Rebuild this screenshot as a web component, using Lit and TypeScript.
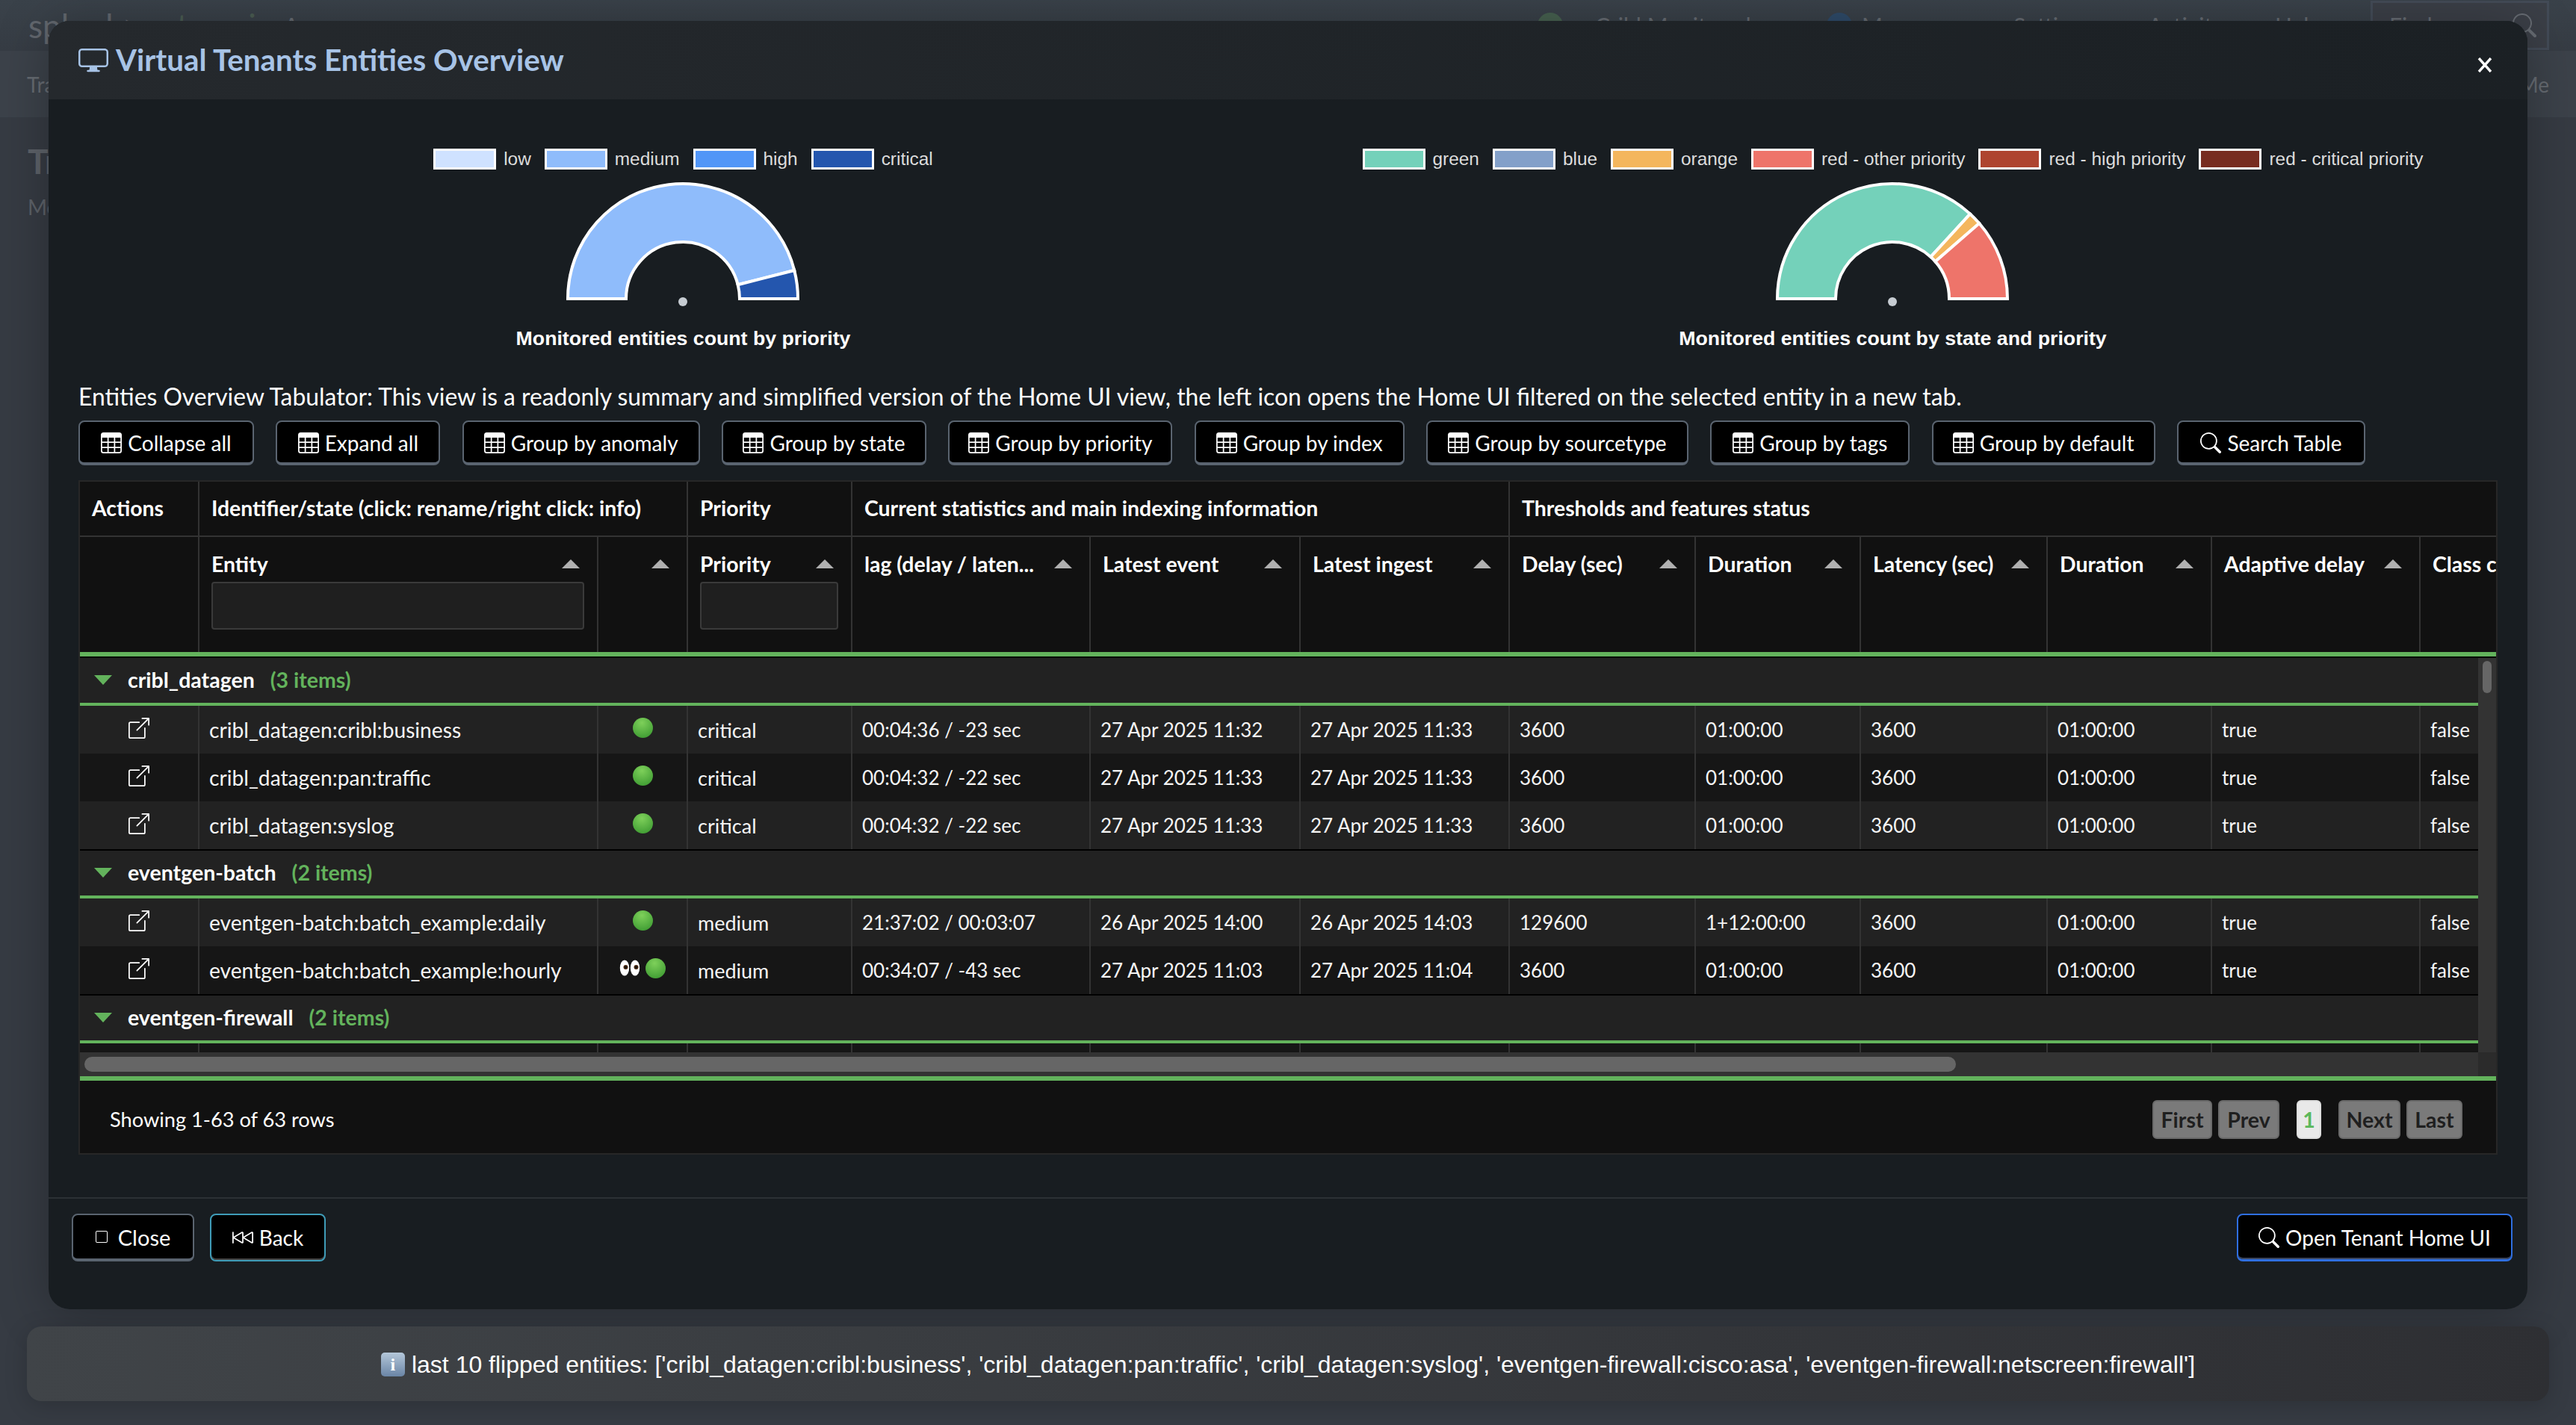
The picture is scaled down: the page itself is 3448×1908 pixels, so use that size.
import { LitElement, html, css, svg } from "lit";
import { customElement } from "lit/decorators.js";

const P = {
  table: "M0 2a2 2 0 0 1 2-2h12a2 2 0 0 1 2 2v12a2 2 0 0 1-2 2H2a2 2 0 0 1-2-2zm15 2h-4v3h4zm0 4h-4v3h4zm0 4h-4v3h3a1 1 0 0 0 1-1zm-5 3v-3H6v3zm-5 0v-3H1v2a1 1 0 0 0 1 1zm-4-4h4V8H1zm0-4h4V4H1zm5-3v3h4V4zm4 4H6v3h4z",
  search: "M11.742 10.344a6.5 6.5 0 1 0-1.397 1.398h-.001q.044.06.098.115l3.85 3.85a1 1 0 0 0 1.415-1.414l-3.85-3.85a1 1 0 0 0-.115-.1zM12 6.5a5.5 5.5 0 1 1-11 0 5.5 5.5 0 0 1 11 0",
  display: "M0 4s0-2 2-2h12s2 0 2 2v6s0 2-2 2h-4q0 1 .25 1.5H11a.5.5 0 0 1 0 1H5a.5.5 0 0 1 0-1h.75Q6 13 6 12H2s-2 0-2-2zm1.398-.855a.76.76 0 0 0-.254.302A1.5 1.5 0 0 0 1 4.01V10c0 .325.078.502.145.602q.105.156.302.254a1.5 1.5 0 0 0 .538.143L2.01 11H14c.325 0 .502-.078.602-.145a.76.76 0 0 0 .254-.302 1.5 1.5 0 0 0 .143-.538L15 9.99V4c0-.325-.078-.502-.145-.602a.76.76 0 0 0-.302-.254A1.5 1.5 0 0 0 13.99 3H2c-.325 0-.502.078-.602.145",
  back: "M.5 3.5A.5.5 0 0 1 1 4v3.248l6.267-3.636c.52-.302 1.233.043 1.233.696v2.94l6.267-3.636c.52-.302 1.233.043 1.233.696v7.384c0 .653-.713.998-1.233.696L8.5 8.752v2.94c0 .653-.713.998-1.233.696L1 8.752V12a.5.5 0 0 1-1 0V4a.5.5 0 0 1 .5-.5m7 1.133L1.696 8 7.5 11.367zm7.5 0L9.196 8 15 11.367z",
  square: "M14 1a1 1 0 0 1 1 1v12a1 1 0 0 1-1 1H2a1 1 0 0 1-1-1V2a1 1 0 0 1 1-1zM2 0a2 2 0 0 0-2 2v12a2 2 0 0 0 2 2h12a2 2 0 0 0 2-2V2a2 2 0 0 0-2-2z",
  ext1: "M8.636 3.5a.5.5 0 0 0-.5-.5H1.5A1.5 1.5 0 0 0 0 4.5v10A1.5 1.5 0 0 0 1.5 16h10a1.5 1.5 0 0 0 1.5-1.5V7.864a.5.5 0 0 0-1 0V14.5a.5.5 0 0 1-.5.5h-10a.5.5 0 0 1-.5-.5v-10a.5.5 0 0 1 .5-.5h6.636a.5.5 0 0 0 .5-.5",
  ext2: "M16 .5a.5.5 0 0 0-.5-.5h-5a.5.5 0 0 0 0 1h3.793L6.146 9.146a.5.5 0 1 0 .708.708L15 1.707V5.5a.5.5 0 0 0 1 0z",
};

const icon = (d: string, size: number, cls = "") => html`<svg class="ico ${cls}" width=${size} height=${size} viewBox="0 0 16 16" fill="currentColor"><path fill-rule="evenodd" d=${d}></path></svg>`;
const extIcon = () => html`<svg class="ico" width="28" height="28" viewBox="0 0 16 16" fill="currentColor"><path fill-rule="evenodd" d=${P.ext1}></path><path fill-rule="evenodd" d=${P.ext2}></path></svg>`;

const CX = 160, CY = 160, RO = 154, RI = 76;
function slice(a0: number, a1: number) {
  const p = (r: number, a: number) => { const t = (a * Math.PI) / 180; return `${(CX + r * Math.cos(t)).toFixed(2)} ${(CY - r * Math.sin(t)).toFixed(2)}`; };
  return `M${p(RO, a0)} A${RO} ${RO} 0 0 1 ${p(RO, a1)} L${p(RI, a1)} A${RI} ${RI} 0 0 0 ${p(RI, a0)} Z`;
}
const gauge = (parts: { from: number; to: number; color: string }[]) => html`<svg class="gauge" width="320" height="172" viewBox="0 0 320 172">
  ${parts.map((s) => svg`<path d=${slice(s.from, s.to)} fill=${s.color} stroke="#fff" stroke-width="4" stroke-linejoin="miter"></path>`)}
  <circle cx="160" cy="164" r="6" fill="#c6ccd2"></circle>
</svg>`;

const chart = (legend: [string, string][], parts: { from: number; to: number; color: string }[], label: string) => html`<div class="chart">
  <div class="legend">${legend.map(([c, t]) => html`<span class="lg"><i class="sw" style="background:${c}"></i>${t}</span>`)}</div>
  ${gauge(parts)}
  <div class="chart-label">${label}</div>
</div>`;

const TOOLBAR: [string, number, string][] = [
  ["Collapse all", 235, P.table], ["Expand all", 220, P.table], ["Group by anomaly", 318, P.table], ["Group by state", 274, P.table],
  ["Group by priority", 300, P.table], ["Group by index", 281, P.table], ["Group by sourcetype", 351, P.table], ["Group by tags", 267, P.table],
  ["Group by default", 299, P.table], ["Search Table", 252, P.search],
];

const TOP_ITEMS: [string, number][] = [["Settings", 180], ["Activity", 170], ["Help", 128]];

const H2: [string, boolean][] = [["", false], ["Entity", true], ["", true], ["Priority", true], ["lag (delay / laten...", true], ["Latest event", true], ["Latest ingest", true], ["Delay (sec)", true], ["Duration", true], ["Latency (sec)", true], ["Duration", true], ["Adaptive delay", true], ["Class change", true]];

type Row = { e: string; eyes?: boolean; p: string; lag: string; ev: string; ing: string; d: string; dd: string };
const GROUPS: { name: string; n: number; rows: Row[] }[] = [
  { name: "cribl_datagen", n: 3, rows: [
    { e: "cribl_datagen:cribl:business", p: "critical", lag: "00:04:36 / -23 sec", ev: "27 Apr 2025 11:32", ing: "27 Apr 2025 11:33", d: "3600", dd: "01:00:00" },
    { e: "cribl_datagen:pan:traffic", p: "critical", lag: "00:04:32 / -22 sec", ev: "27 Apr 2025 11:33", ing: "27 Apr 2025 11:33", d: "3600", dd: "01:00:00" },
    { e: "cribl_datagen:syslog", p: "critical", lag: "00:04:32 / -22 sec", ev: "27 Apr 2025 11:33", ing: "27 Apr 2025 11:33", d: "3600", dd: "01:00:00" },
  ] },
  { name: "eventgen-batch", n: 2, rows: [
    { e: "eventgen-batch:batch_example:daily", p: "medium", lag: "21:37:02 / 00:03:07", ev: "26 Apr 2025 14:00", ing: "26 Apr 2025 14:03", d: "129600", dd: "1+12:00:00" },
    { e: "eventgen-batch:batch_example:hourly", eyes: true, p: "medium", lag: "00:34:07 / -43 sec", ev: "27 Apr 2025 11:03", ing: "27 Apr 2025 11:04", d: "3600", dd: "01:00:00" },
  ] },
  { name: "eventgen-firewall", n: 2, rows: [] },
];

const PAGES: [string, number, boolean][] = [["First", 80, false], ["Prev", 82, false], ["1", 33, true], ["Next", 83, false], ["Last", 75, false]];

const eyes = () => html`<svg class="eyes" width="28" height="22" viewBox="0 0 28 22">
  <ellipse cx="7" cy="11" rx="6.2" ry="10.5" fill="#fff"></ellipse><ellipse cx="21" cy="11" rx="6.2" ry="10.5" fill="#fff"></ellipse>
  <circle cx="8.5" cy="10" r="3" fill="#4a2a12"></circle><circle cx="22.5" cy="10" r="3" fill="#4a2a12"></circle>
  <circle cx="8.5" cy="10" r="1.5" fill="#111"></circle><circle cx="22.5" cy="10" r="1.5" fill="#111"></circle>
</svg>`;

@customElement("app-root")
export class AppRoot extends LitElement {
  static styles = css`
    :host { display: block; position: relative; width: 3448px; height: 1908px; overflow: hidden; background: #363b43; font-family: Lato, "Open Sans", sans-serif; color: #fff; }
    * { box-sizing: border-box; }
    .ico { flex: none; display: block; }

    /* dimmed page behind the modal */
    .topbar { height: 68px; display: flex; align-items: center; padding: 0 36px 0 38px; background: linear-gradient(#3a424a, #363c44); color: #666b72; font-size: 30px; }
    .brand { font-size: 44px; width: 342px; color: #62676e; white-space: nowrap; }
    .brand b { font-weight: 400; color: #4a5c52; }
    .apps { flex: 1; }
    .tb-dot { width: 34px; height: 34px; border-radius: 50%; margin-right: 43px; background: #46604f; flex: none; }
    .tb-dot.blue { background: #2e4a68; margin-right: 13px; }
    .tb-item { white-space: nowrap; flex: none; }
    .cribl { width: 310px; }
    .msgs { width: 203px; }
    .find { width: 239px; height: 66px; border: 3px solid #434b57; background: #3b3f47; display: flex; align-items: center; justify-content: space-between; padding: 0 14px 0 22px; flex: none; }
    .subbar { height: 89px; background: #3c424a; display: flex; justify-content: space-between; align-items: center; padding: 0 36px; color: #666b72; font-size: 28px; }
    .main { padding: 26px 37px; color: #5d6269; }
    .main h1 { margin: 0 0 8px; font-size: 46px; line-height: 66px; font-weight: 700; }
    .main p { margin: 0; font-size: 28px; line-height: 40px; }

    /* modal */
    .modal { position: absolute; left: 65px; top: 28px; width: 3318px; height: 1725px; border-radius: 28px; background: #181d21; display: flex; flex-direction: column; overflow: hidden; }
    .modal-shadow { position: absolute; left: 65px; top: 28px; width: 3318px; height: 1725px; border-radius: 28px; box-shadow: 0 8px 70px rgba(0, 0, 0, 0.28); }
    .m-head { height: 105px; flex: none; display: flex; align-items: center; justify-content: space-between; padding: 0 47px 0 40px; background: linear-gradient(90deg, #25292d, #1b2024); }
    .m-title { display: flex; align-items: center; gap: 10px; color: #a7c3e6; font-size: 40.3px; font-weight: 700; margin-top: -2px; }
    .x { margin-top: 12px; display: block; }
    .m-body { flex: 1; padding: 66px 40px 0; display: flex; flex-direction: column; min-height: 0; }
    .charts { display: grid; grid-template-columns: 1fr 1fr; height: 313px; flex: none; }
    .chart { display: flex; flex-direction: column; align-items: center; }
    .legend { display: flex; height: 28px; gap: 18px; font: 24.4px/28px "Liberation Sans", Arial, sans-serif; color: #dcdcdc; white-space: nowrap; }
    .lg { display: flex; gap: 10px; }
    .sw { display: block; width: 84px; height: 28px; border: 3px solid #fff; }
    .gauge { display: block; margin-top: 13px; margin-left: -1px; }
    .chart-label { margin-top: 23px; font: 700 26.7px/36px "Liberation Sans", Arial, sans-serif; color: #fff; white-space: nowrap; }
    .desc { flex: none; height: 40px; font-size: 31.83px; line-height: 38px; color: #fff; white-space: nowrap; }
    .toolbar { flex: none; display: flex; gap: 29.33px; margin: 11px 0 20px; }
    .btn { display: flex; align-items: center; justify-content: center; gap: 8px; height: 60px; flex: none; background: #000; color: #fff; border: 2px solid #5a6470; border-bottom-width: 4px; border-radius: 8px; font-size: 28px; white-space: nowrap; padding-top: 2px; }

    /* table */
    .table { flex: none; height: 903px; width: 3238px; border: 2px solid #272727; background: #111; display: flex; flex-direction: column; overflow: hidden; color: #fff; }
    .g { display: grid; grid-template-columns: 160px 534px 120px 220px 319px 281px 280px 249px 221px 250px 220px 279px 300px; }
    .h1 { height: 74px; border-bottom: 2px solid #333; flex: none; }
    .h1 > div { display: flex; align-items: center; padding-left: 16px; font-size: 28.4px; font-weight: 700; border-right: 2px solid #333; white-space: nowrap; padding-bottom: 2px; }
    .h2 { height: 154px; flex: none; }
    .h2 > div { padding: 20px 17px 0 16px; border-right: 2px solid #333; }
    .ht { display: flex; align-items: center; justify-content: space-between; height: 32px; padding-right: 6px; font-size: 28.4px; font-weight: 700; white-space: nowrap; }
    .arrow { width: 0; height: 0; flex: none; border-left: 12px solid transparent; border-right: 12px solid transparent; border-bottom: 12px solid #b0b0b0; margin-left: auto; }
    .filter { margin-top: 8px; height: 64px; background: #1f1f1f; border: 2px solid #3a3a3a; border-radius: 4px; }
    .hline { flex: none; height: 8px; background: #000; border-top: 6px solid #63b35c; }
    .tbody { flex: none; height: 528px; display: flex; }
    .rows { width: 3210px; height: 528px; overflow: hidden; flex: none; }
    .grp { height: 64px; background: #222; border-bottom: 4px solid #63b35c; display: flex; align-items: center; gap: 21px; padding: 0 0 2px 19px; font-size: 28.5px; font-weight: 700; }
    .tri { width: 0; height: 0; border-left: 12px solid transparent; border-right: 12px solid transparent; border-top: 13px solid #63b35c; }
    .cnt { color: #63b35c; }
    .row { height: 64px; background: #222; }
    .row.even { background: #161616; }
    .row.stub { height: 12px; background: #161616; }
    .grp-end { height: 2px; background: #000; }
    .c { display: flex; align-items: center; padding-left: 13px; border-right: 2px solid #333; font-size: 26px; white-space: nowrap; color: #f5f5f5; }
    .c.ca { justify-content: center; padding: 0 0 4px; color: #fff; }
    .c.ce { font-size: 28.2px; }
    .c.cp { font-size: 27px; }
    .c.cs { justify-content: center; padding: 0 0 6px; gap: 7px; }
    .dot { width: 27px; height: 27px; border-radius: 50%; background: radial-gradient(circle at 45% 25%, #7ed05a, #3f9c33 85%); }
    .eyes { display: block; }
    .vs { flex: 1; background: #333; padding: 4px 0 0 6px; }
    .vs i { display: block; width: 12px; height: 43px; border-radius: 6px; background: #666; }
    .hs { flex: none; height: 32px; display: flex; }
    .hs-track { width: 3210px; background: #333; padding: 6px 0 0 6px; flex: none; }
    .hs-track i { display: block; width: 2505px; height: 20px; border-radius: 10px; background: #666; }
    .hs-corner { flex: 1; background: #2b2b2b; }
    .gline { flex: none; height: 6px; background: #63b35c; }
    .tfoot { flex: 1; display: flex; align-items: center; justify-content: space-between; padding: 6px 45px 0 40px; font-size: 27.2px; }
    .pager { display: flex; align-items: center; gap: 8px; }
    .pg { height: 52px; display: flex; align-items: center; justify-content: center; background: #7a7a7a; border: 2px solid #6a6a6a; border-radius: 6px; color: #1f1f1f; font-size: 28.5px; font-weight: 700; }
    .pg.on { background: #e9e9e9; border-color: #ddd; color: #5cb85c; margin: 0 15px; }

    .m-foot { flex: none; height: 150px; border-top: 2px solid #2c3135; padding: 20px 20px 0 31px; display: flex; justify-content: space-between; align-items: flex-start; }
    .fl { display: flex; gap: 21px; }
    .btn.f { height: 64px; padding-top: 0; }
    .btn.back { border-color: #3f9cb8; box-shadow: inset 0 -2px 0 #444; border-bottom-width: 2px; }
    .btn.open { border-color: #2f6fe0; border-bottom-width: 3px; box-shadow: inset 0 -2px 0 #3a4660; }
    .close-t { margin-left: 6px; font-size: 29px; }

    /* toast */
    .toast { position: absolute; left: 36px; top: 1776px; width: 3376px; height: 100px; border-radius: 20px; background: linear-gradient(90deg, #404448, #2e2f33); box-shadow: 0 6px 30px rgba(0, 0, 0, 0.18); display: flex; align-items: center; justify-content: center; gap: 9px; padding-top: 2px; font: 32px/40px "Liberation Sans", Arial, sans-serif; color: #fff; white-space: nowrap; }
    .info { width: 32px; height: 32px; border-radius: 5px; background: linear-gradient(#b4c7d9, #6a85a6); display: flex; align-items: center; justify-content: center; font: 700 24px/1 "Liberation Serif", serif; color: #fff; }
  `;

  render() {
    return html`
      <div class="topbar">
        <div class="brand">splunk&gt;<b>enterprise</b></div>
        <div class="apps">Apps</div>
        <i class="tb-dot"></i><span class="tb-item cribl">Cribl Monitored</span>
        <i class="tb-dot blue"></i><span class="tb-item msgs">Messages</span>
        ${TOP_ITEMS.map(([t, w]) => html`<span class="tb-item" style="width:${w}px">${t}</span>`)}
        <div class="find"><span>Find</span>${icon(P.search, 32)}</div>
      </div>
      <div class="subbar"><span>TrackMe</span><span>TrackMe</span></div>
      <div class="main"><h1>TrackMe</h1><p>Monitored</p></div>
      <div class="modal-shadow"></div>
      <div class="modal">
        <div class="m-head">
          <div class="m-title">${icon(P.display, 40)}<span>Virtual Tenants Entities Overview</span></div>
          <svg class="x" width="20" height="20" viewBox="0 0 20 20"><path d="M2 1 L18 19 M18 1 L2 19" stroke="#fff" stroke-width="3.4" fill="none"></path></svg>
        </div>
        <div class="m-body">
          <div class="charts">
            ${chart([["#cfe2ff", "low"], ["#8fbcfb", "medium"], ["#5296f7", "high"], ["#2456ae", "critical"]],
              [{ from: 180, to: 14.3, color: "#8fbcfb" }, { from: 14.3, to: 0, color: "#2456ae" }],
              "Monitored entities count by priority")}
            ${chart([["#74d1ba", "green"], ["#83a0c9", "blue"], ["#f4b65d", "orange"], ["#ee746a", "red - other priority"], ["#ae442f", "red - high priority"], ["#772c20", "red - critical priority"]],
              [{ from: 180, to: 47.5, color: "#74d1ba" }, { from: 47.5, to: 41, color: "#f4b65d" }, { from: 41, to: 0, color: "#ee746a" }],
              "Monitored entities count by state and priority")}
          </div>
          <div class="desc">Entities Overview Tabulator: This view is a readonly summary and simplified version of the Home UI view, the left icon opens the Home UI filtered on the selected entity in a new tab.</div>
          <div class="toolbar">
            ${TOOLBAR.map(([t, w, d]) => html`<div class="btn" style="width:${w}px">${icon(d, 28)}<span>${t}</span></div>`)}
          </div>
          <div class="table">
            <div class="g h1">
              <div>Actions</div>
              <div style="grid-column: span 2">Identifier/state (click: rename/right click: info)</div>
              <div>Priority</div>
              <div style="grid-column: span 3">Current statistics and main indexing information</div>
              <div style="grid-column: span 6; border-right: 0">Thresholds and features status</div>
            </div>
            <div class="g h2">
              ${H2.map(([t, sort], i) => html`<div>
                <div class="ht">${t ? html`<span>${t}</span>` : ""}${sort ? html`<i class="arrow"></i>` : ""}</div>
                ${i === 1 || i === 3 ? html`<div class="filter"></div>` : ""}
              </div>`)}
            </div>
            <div class="hline"></div>
            <div class="tbody">
              <div class="rows">
                ${GROUPS.map((g) => html`
                  <div class="grp"><i class="tri"></i><span>${g.name}</span><span class="cnt">(${g.n} items)</span></div>
                  ${g.rows.map((r, i) => html`<div class="g row ${i % 2 ? "even" : ""}">
                    <div class="c ca">${extIcon()}</div>
                    <div class="c ce">${r.e}</div>
                    <div class="c cs">${r.eyes ? eyes() : ""}<i class="dot"></i></div>
                    <div class="c cp">${r.p}</div>
                    <div class="c">${r.lag}</div>
                    <div class="c">${r.ev}</div>
                    <div class="c">${r.ing}</div>
                    <div class="c">${r.d}</div>
                    <div class="c">${r.dd}</div>
                    <div class="c">3600</div>
                    <div class="c">01:00:00</div>
                    <div class="c">true</div>
                    <div class="c">false</div>
                  </div>`)}
                  ${g.rows.length ? html`<div class="grp-end"></div>` : html`<div class="g row stub">${H2.map(() => html`<div class="c"></div>`)}</div>`}
                `)}
              </div>
              <div class="vs"><i></i></div>
            </div>
            <div class="hs"><div class="hs-track"><i></i></div><div class="hs-corner"></div></div>
            <div class="gline"></div>
            <div class="tfoot">
              <span>Showing 1-63 of 63 rows</span>
              <div class="pager">${PAGES.map(([t, w, on]) => html`<div class="pg ${on ? "on" : ""}" style="width:${w}px">${t}</div>`)}</div>
            </div>
          </div>
        </div>
        <div class="m-foot">
          <div class="fl">
            <div class="btn f" style="width:164px">${icon(P.square, 16)}<span class="close-t">Close</span></div>
            <div class="btn f back" style="width:155px">${icon(P.back, 28)}<span>Back</span></div>
          </div>
          <div class="btn f open" style="width:369px">${icon(P.search, 28)}<span>Open Tenant Home UI</span></div>
        </div>
      </div>
      <div class="toast"><span class="info">i</span><span>last 10 flipped entities: ['cribl_datagen:cribl:business', 'cribl_datagen:pan:traffic', 'cribl_datagen:syslog', 'eventgen-firewall:cisco:asa', 'eventgen-firewall:netscreen:firewall']</span></div>
    `;
  }
}
